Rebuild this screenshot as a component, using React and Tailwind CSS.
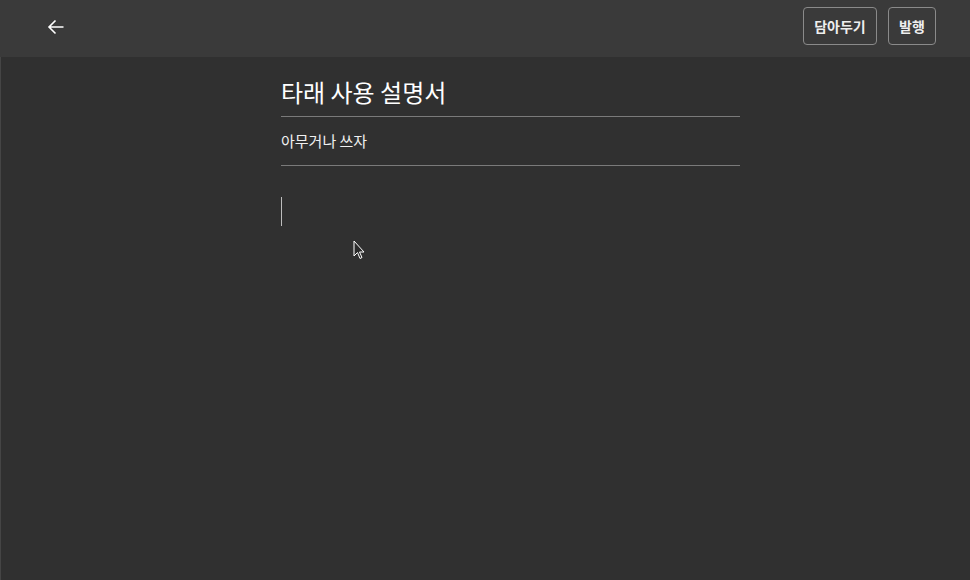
export default function App() {
  const font = { fontFamily: '"Noto Sans CJK KR", "Noto Sans", sans-serif' };
  return (
    <div className="relative flex h-[580px] w-[970px] flex-col bg-[#303030] text-white" style={font}>
      {/* Header */}
      <header className="flex h-[57px] shrink-0 items-start justify-between bg-[#3a3a3a] pl-[44px] pr-[34px]">
        <button type="button" className="mt-[15px] flex h-6 w-6 items-center justify-center text-white">
          <svg width="18" height="18" viewBox="0 0 18 18" fill="none" stroke="currentColor" strokeWidth="1.6">
            <path d="M16.5 9H2M8.5 2.5L2 9l6.5 6.5" />
          </svg>
        </button>
        <div className="mt-[7px] flex items-center gap-[11px]">
          <button type="button" className="h-[38px] w-[74px] rounded-[4px] border border-[#8a8a8a] text-[14px] font-bold text-[#eeeeee]">
            담아두기
          </button>
          <button type="button" className="h-[38px] w-[48px] rounded-[4px] border border-[#8a8a8a] text-[14px] font-bold text-[#eeeeee]">
            발행
          </button>
        </div>
      </header>

      {/* Editor */}
      <main className="ml-[281px] flex w-[459px] flex-col pt-[19px]">
        <div className="border-b border-[#7a7a7a] pb-[8px] text-[24px] leading-[32px] text-white">타래 사용 설명서</div>
        <div className="border-b border-[#7a7a7a] pb-[13px] pt-[12px] text-[15px] leading-[23px] text-[#f0f0f0]">아무거나 쓰자</div>
        <div className="pt-[31px]">
          <div className="h-[29px] w-px bg-[#bdbdbd]" />
        </div>
      </main>

      {/* Mouse pointer */}
      <svg className="absolute left-[353px] top-[240px]" width="13" height="20" viewBox="0 0 13 20">
        <path d="M1 1v15l3.5-3.5 2.5 6 2-1-2.5-5.5H11z" fill="#2a2a2a" stroke="#ffffff" strokeWidth="1" strokeLinejoin="round" />
      </svg>

      <div className="absolute bottom-0 left-0 top-[57px] w-px bg-[#454545]" />
    </div>
  );
}
